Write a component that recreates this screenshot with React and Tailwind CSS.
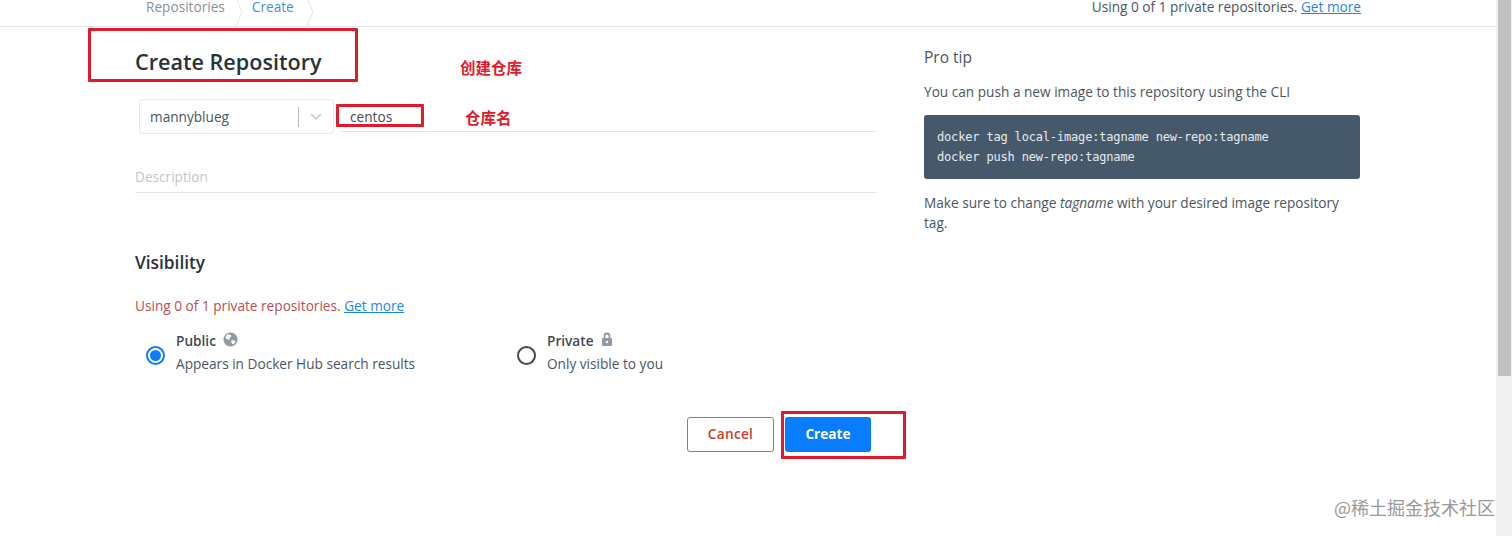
const cjk = "font-['Noto_Sans_CJK_SC',sans-serif]";

function Globe() {
  return (
    <svg viewBox="0 0 16 16" className="w-[15px] h-[15px] ml-[7px] mb-[3px]">
      <circle cx="8" cy="8" r="7.500" fill="#8f9aa3" />
      <path d="M5 2.500c2 .2 3.500.6 4 1.600.3.9-1 1.200-1.600 1.900-.6.8.2 1.600-.6 2.200C6 8.700 4 7.500 2.500 6.500 2.800 4.700 3.700 3.300 5 2.500zM9 9c1.500-.3 3.500.2 4.300 1-.6 1.500-1.800 2.600-3.300 3.100C9.500 11.800 8.200 10.200 9 9z" fill="#fff" />
    </svg>
  );
}

function LockIcon() {
  return (
    <svg viewBox="0 0 12 14" className="w-[12px] h-[14px] ml-[7px] mb-[4px]">
      <path d="M3.500 6V4a2.500 2.500 0 0 1 5 0v2" fill="none" stroke="#8f9aa3" strokeWidth="1.800" />
      <rect x="1" y="6" width="10" height="8" rx="1" fill="#8f9aa3" />
      <circle cx="6" cy="10" r="1.200" fill="#fff" />
    </svg>
  );
}

function Radio({ checked }) {
  return (
    <span className={`flex items-center justify-center w-[19px] h-[19px] mt-[5px] rounded-full border-2 bg-white ${checked ? 'border-[#0a7cff]' : 'border-[#3f4a52]'}`}>
      {checked && <span className="w-[11px] h-[11px] rounded-full bg-[#0a7cff]" />}
    </span>
  );
}

function RedBox({ className }) {
  return <div className={`absolute rounded-[1px] border-[3px] border-[#e01b2b] ${className}`} />;
}

export default function App() {
  return (
    <div className="relative flex w-[1512px] h-[536px] overflow-hidden bg-white text-[#4b565e] text-[13.65px] font-['Open_Sans',sans-serif]">
      <div className="flex-1 min-w-0">
        {/* Breadcrumb bar */}
        <div className="flex items-start justify-between h-[27px] border-b border-[#e3e6e8] pl-[146px] pr-[135px]">
          <div className="flex items-start">
            <span className="text-[#8a9299] leading-[14px]">Repositories</span>
            <svg viewBox="0 0 10 26" className="w-[10px] h-[26px] ml-[7px] mr-[10px]">
              <path d="M5 0l5 12-6 14" fill="none" stroke="#e6e8ea" />
            </svg>
            <span className="text-[#3d95d8] leading-[14px]">Create</span>
            <svg viewBox="0 0 10 26" className="w-[10px] h-[26px] ml-[9px]">
              <path d="M5 0l5 12-6 14" fill="none" stroke="#e0e3e5" />
            </svg>
          </div>
          <div className="leading-[14px]">
            Using 0 of 1 private repositories.{' '}
            <a className="text-[#1f86e8] underline">Get more</a>
          </div>
        </div>

        <div className="flex">
          {/* Form column */}
          <div className="w-[742px] ml-[135px] shrink-0">
            <h1 className="text-[21.600px] leading-[30px] font-semibold text-[#27333a] mt-[20px]">Create Repository</h1>

            <div className="flex mt-[22px] ml-[4px] h-[35px]">
              <div className="flex items-center w-[195px] h-[35px] border border-[#e6e8ea] rounded-[4px] pl-[10px] pt-[2px]">
                <span className="flex-1">mannyblueg</span>
                <span className="w-px h-[20px] bg-[#b5bbc0] -mt-[2px]" />
                <svg viewBox="0 0 12 8" className="w-[12px] h-[8px] mx-[11px] -mt-[1px]">
                  <path d="M1 1l5 5 5-5" fill="none" stroke="#c4c9cd" strokeWidth="1.500" />
                </svg>
              </div>
              <div className="flex-1 ml-[7px] h-[33px] border-b border-[#e3e6e8] pl-[9px] pt-[8px] leading-[20px] text-[#3f4a52]">centos</div>
            </div>

            <div className="mt-[26px] h-[33px] border-b border-[#e3e6e8] leading-[18px] pt-[8px] text-[#c2c7cb]">Description</div>

            <h2 className="mt-[58px] text-[17.300px] leading-[24px] font-semibold text-[#27333a]">Visibility</h2>

            <p className="mt-[22px] leading-[18px] text-[#b5504f]">
              Using 0 of 1 private repositories.{' '}
              <a className="text-[#1f86e8] underline">Get more</a>
            </p>

            <div className="flex mt-[15px] ml-[11px]">
              <div className="flex items-center w-[371px]">
                <Radio checked />
                <div className="ml-[11px]">
                  <div className="flex items-center h-[22px] font-semibold text-[#3f4a52]">Public<Globe /></div>
                  <div className="leading-[24px]">Appears in Docker Hub search results</div>
                </div>
              </div>
              <div className="flex items-center">
                <Radio />
                <div className="ml-[11px]">
                  <div className="flex items-center h-[22px] font-semibold text-[#3f4a52]">Private<LockIcon /></div>
                  <div className="leading-[24px]">Only visible to you</div>
                </div>
              </div>
            </div>

            <div className="flex justify-end gap-[11px] mt-[41px] pr-[6px]">
              <button className="w-[87px] h-[35px] rounded-[3px] border border-[#d9604c] font-semibold tracking-[0.3px] text-[#c9402c]">Cancel</button>
              <button className="w-[86px] h-[35px] rounded-[3px] bg-[#0a7cff] font-bold text-white">Create</button>
            </div>
          </div>

          {/* Pro tip column */}
          <div className="w-[436px] ml-[47px] shrink-0">
            <h3 className="mt-[19px] text-[15.500px] leading-[22px]">Pro tip</h3>
            <p className="mt-[14px] leading-[20px]">You can push a new image to this repository using the CLI</p>
            <pre className="mt-[13px] h-[64px] rounded-[3px] bg-[#46596b] pl-[13px] pt-[13px] text-[12px] leading-[19.500px] text-[#e6ebef] font-['DejaVu_Sans_Mono',monospace] tracking-[-0.17px]">
              {'docker tag local-image:tagname new-repo:tagname\ndocker push new-repo:tagname'}
            </pre>
            <p className="mt-[14px] leading-[20px] w-[425px]">
              Make sure to change <em>tagname</em> with your desired image repository tag.
            </p>
          </div>
        </div>
      </div>

      {/* Scrollbar */}
      <div className="w-[16px] shrink-0 bg-[#f0f0f0] pl-[2px] pr-[1px]">
        <div className="h-[376px] bg-[#c1c1c1]" />
      </div>

      {/* Red annotations drawn on top of the screenshot */}
      <RedBox className="left-[88px] top-[28px] w-[270px] h-[54px]" />
      <RedBox className="left-[336px] top-[104px] w-[88px] h-[23px]" />
      <RedBox className="left-[781px] top-[411px] w-[125px] h-[48px]" />
      <span className={`absolute left-[460px] top-[57px] text-[15.500px] leading-[20px] font-bold text-[#e01b2b] ${cjk}`}>创建仓库</span>
      <span className={`absolute left-[465px] top-[107px] text-[15.500px] leading-[20px] font-bold text-[#e01b2b] ${cjk}`}>仓库名</span>

      {/* Watermark */}
      <span className={`absolute left-[1334px] top-[495px] text-[18px] leading-[24px] text-[#9a9a9a] ${cjk}`}>@稀土掘金技术社区</span>
    </div>
  );
}
